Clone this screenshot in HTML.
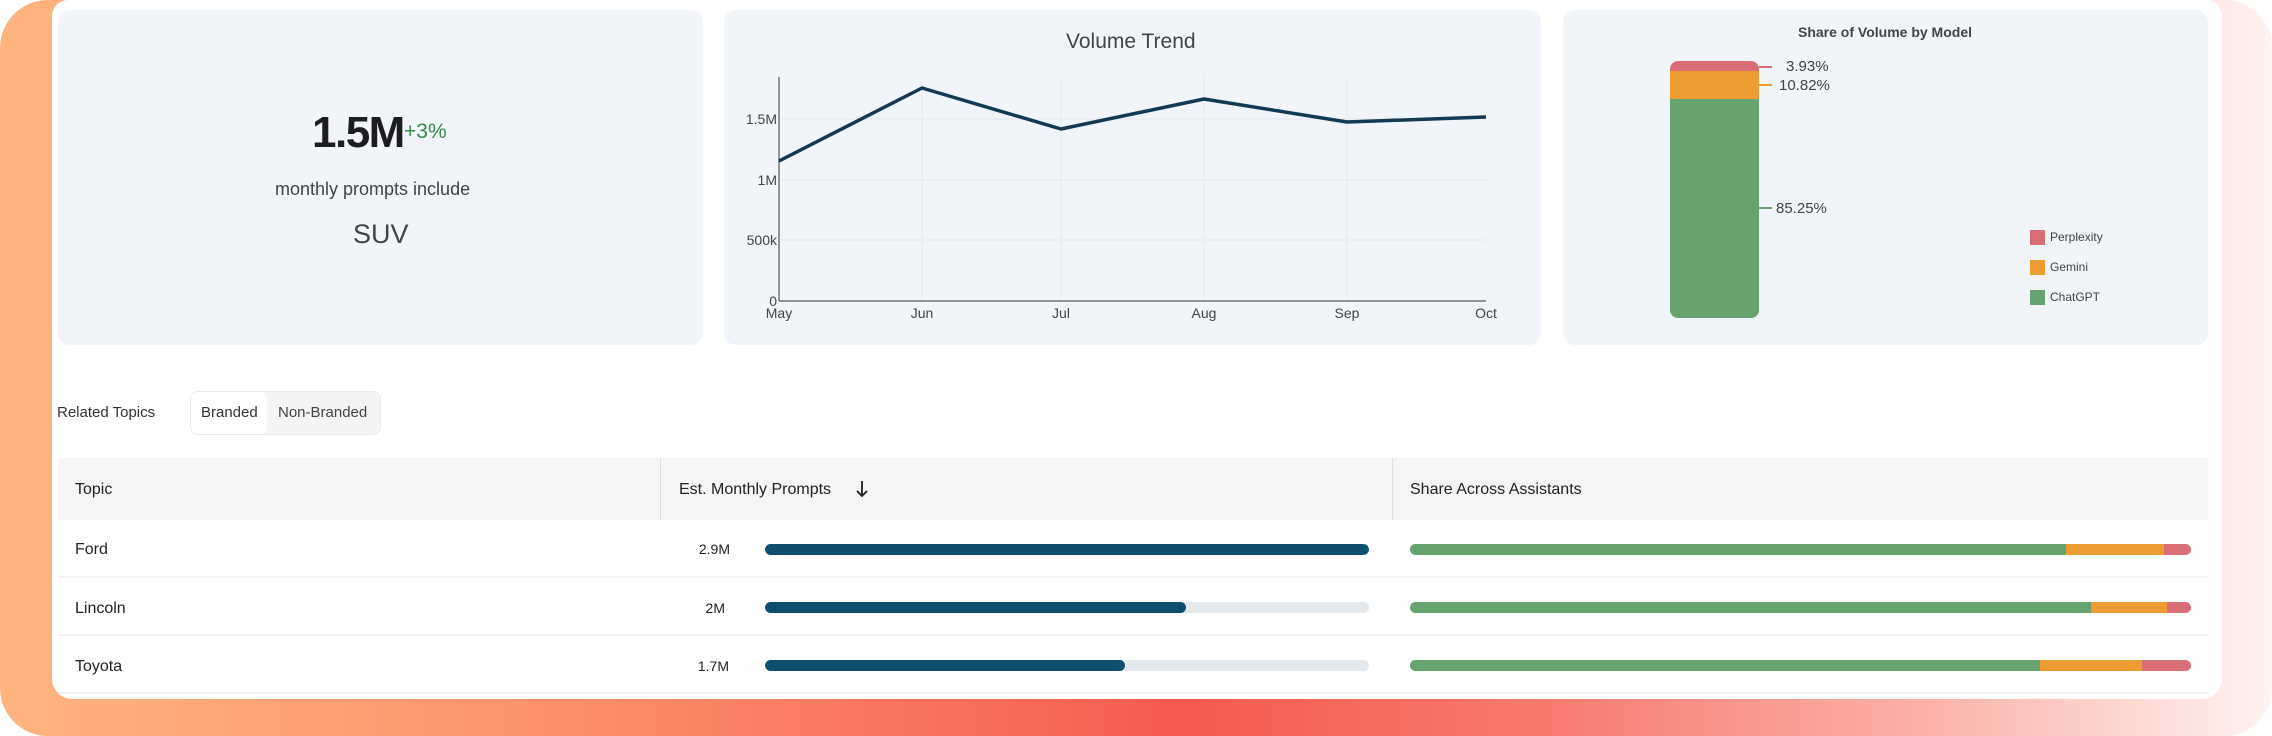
<!DOCTYPE html>
<html><head><meta charset="utf-8"><style>
*{margin:0;padding:0;box-sizing:border-box}
body{width:2272px;height:736px;overflow:hidden;background:#fff;font-family:"Liberation Sans",sans-serif;position:relative}
.bg{position:absolute;left:0;top:0;width:2272px;height:736px;border-radius:48px;background:linear-gradient(90deg,#ffb480 0%,#fd9870 20%,#f86a57 45%,#f55a4f 52%,#f87a6f 68%,#fbb2aa 85%,#fef3f0 100%)}
.card{position:absolute;left:52px;top:0;width:2170px;height:699px;border-radius:16px 16px 20px 20px;background:#fff}
.p{position:absolute;top:10px;height:335px;background:#f1f4f9;border-radius:12px}
.a{position:absolute;white-space:nowrap}
.row{position:absolute;left:58px;width:2150px;height:58px;border-bottom:2px solid #f3f4f5}
.bar{position:absolute;height:11px;border-radius:6px;overflow:hidden}
</style></head><body>
<div class="bg"></div>
<div class="card"></div>

<div class="p" style="left:58px;width:645px"></div>
<div class="a" style="left:312px;top:108px;font-size:44px;font-weight:bold;color:#1d1d1f;letter-spacing:-1.5px">1.5M</div>
<div class="a" style="left:404px;top:120px;font-size:21px;color:#3b8a4a">+3%</div>
<div class="a" style="left:275px;top:179px;font-size:18px;color:#444">monthly prompts include</div>
<div class="a" style="left:353px;top:219px;font-size:27px;color:#444">SUV</div>

<div class="p" style="left:724px;width:817px"></div>
<div class="a" style="left:1066px;top:30px;font-size:21px;color:#444">Volume Trend</div>
<svg class="a" style="left:724px;top:0" width="817" height="345" font-family="Liberation Sans" font-size="14" fill="#444">
<g stroke="#e6e9ee" stroke-width="1"><line x1="55" y1="119" x2="762" y2="119"/><line x1="55" y1="180" x2="762" y2="180"/><line x1="55" y1="240" x2="762" y2="240"/>
<line x1="198" y1="77" x2="198" y2="301"/><line x1="337" y1="77" x2="337" y2="301"/><line x1="480" y1="77" x2="480" y2="301"/><line x1="623" y1="77" x2="623" y2="301"/></g>
<line x1="55" y1="77" x2="55" y2="301" stroke="#333" stroke-width="1"/>
<line x1="55" y1="301" x2="762" y2="301" stroke="#333" stroke-width="1"/>
<polyline points="55,161 198,88 337,129 480,99 623,122 762,117" fill="none" stroke="#133a52" stroke-width="3.5" stroke-linejoin="round"/>
<g text-anchor="end"><text x="53" y="124">1.5M</text><text x="53" y="185">1M</text><text x="53" y="245">500k</text><text x="53" y="306">0</text></g>
<g text-anchor="middle"><text x="55" y="318">May</text><text x="198" y="318">Jun</text><text x="337" y="318">Jul</text><text x="480" y="318">Aug</text><text x="623" y="318">Sep</text><text x="762" y="318">Oct</text></g>
</svg>

<div class="p" style="left:1563px;width:645px"></div>
<svg class="a" style="left:1563px;top:0" width="645" height="345" font-family="Liberation Sans" fill="#444">
<text x="322" y="37" text-anchor="middle" font-size="14" font-weight="bold">Share of Volume by Model</text>
<defs><clipPath id="c"><rect x="107" y="61" width="89" height="257" rx="8"/></clipPath></defs>
<g clip-path="url(#c)"><rect x="107" y="61" width="89" height="10" fill="#db6d77"/><rect x="107" y="71" width="89" height="28" fill="#eb9c33"/><rect x="107" y="99" width="89" height="219" fill="#66a36e"/></g>
<line x1="196" y1="67" x2="209" y2="67" stroke="#db6d77" stroke-width="2"/>
<line x1="196" y1="85" x2="209" y2="85" stroke="#eb9c33" stroke-width="2"/>
<line x1="196" y1="208" x2="209" y2="208" stroke="#66a36e" stroke-width="2"/>
<g font-size="15"><text x="223" y="71">3.93%</text><text x="216" y="90">10.82%</text><text x="213" y="213">85.25%</text></g>
<rect x="467" y="230" width="15" height="15" fill="#db6d77"/><rect x="467" y="260" width="15" height="15" fill="#eb9c33"/><rect x="467" y="290" width="15" height="15" fill="#66a36e"/>
<g font-size="12"><text x="487" y="241">Perplexity</text><text x="487" y="271">Gemini</text><text x="487" y="301">ChatGPT</text></g>
</svg>

<div class="a" style="left:57px;top:404px;font-size:15px;color:#333">Related Topics</div>
<div class="a" style="left:190px;top:391px;width:191px;height:44px;border:1px solid #e8e8e8;border-radius:8px;background:#f4f4f4"></div>
<div class="a" style="left:191px;top:392px;width:76px;height:42px;border-radius:7px;background:#fff"></div>
<div class="a" style="left:201px;top:404px;font-size:15px;color:#333">Branded</div>
<div class="a" style="left:278px;top:404px;font-size:15px;color:#444">Non-Branded</div>

<div class="a" style="left:58px;top:458px;width:2150px;height:62px;background:#f5f5f5"></div>
<div class="a" style="left:660px;top:458px;width:1px;height:62px;background:#ddd"></div>
<div class="a" style="left:1392px;top:458px;width:1px;height:62px;background:#ddd"></div>
<div class="a" style="left:75px;top:481px;font-size:16px;color:#222">Topic</div>
<div class="a" style="left:679px;top:481px;font-size:16px;color:#222">Est. Monthly Prompts</div>
<svg class="a" style="left:854px;top:479px" width="16" height="20"><path d="M8 2V17M3 12L8 17L13 12" fill="none" stroke="#222" stroke-width="1.8"/></svg>
<div class="a" style="left:1410px;top:481px;font-size:16px;color:#222">Share Across Assistants</div>

<div class="row" style="top:520px"></div>
<div class="row" style="top:578px"></div>
<div class="row" style="top:636px"></div>

<div class="a" style="left:75px;top:541px;font-size:16px;color:#222">Ford</div>
<div class="a" style="left:75px;top:600px;font-size:16px;color:#222">Lincoln</div>
<div class="a" style="left:75px;top:658px;font-size:16px;color:#222">Toyota</div>
<div class="a" style="left:630px;width:100px;text-align:right;top:541px;font-size:14px;color:#222">2.9M</div>
<div class="a" style="left:630px;width:95px;text-align:right;top:600px;font-size:14px;color:#222">2M</div>
<div class="a" style="left:630px;width:99px;text-align:right;top:658px;font-size:14px;color:#222">1.7M</div>

<div class="bar" style="left:765px;top:544px;width:604px;background:#e3e9ec"><div style="width:604px;height:11px;background:#0e4f6e;border-radius:6px"></div></div>
<div class="bar" style="left:765px;top:602px;width:604px;background:#e3e9ec"><div style="width:421px;height:11px;background:#0e4f6e;border-radius:6px"></div></div>
<div class="bar" style="left:765px;top:660px;width:604px;background:#e3e9ec"><div style="width:360px;height:11px;background:#0e4f6e;border-radius:6px"></div></div>

<div class="bar" style="left:1410px;top:544px;width:781px;display:flex"><div style="width:656px;background:#66a36e"></div><div style="width:98px;background:#eb9c33"></div><div style="flex:1;background:#db6d77"></div></div>
<div class="bar" style="left:1410px;top:602px;width:781px;display:flex"><div style="width:681px;background:#66a36e"></div><div style="width:76px;background:#eb9c33"></div><div style="flex:1;background:#db6d77"></div></div>
<div class="bar" style="left:1410px;top:660px;width:781px;display:flex"><div style="width:630px;background:#66a36e"></div><div style="width:102px;background:#eb9c33"></div><div style="flex:1;background:#db6d77"></div></div>
</body></html>
